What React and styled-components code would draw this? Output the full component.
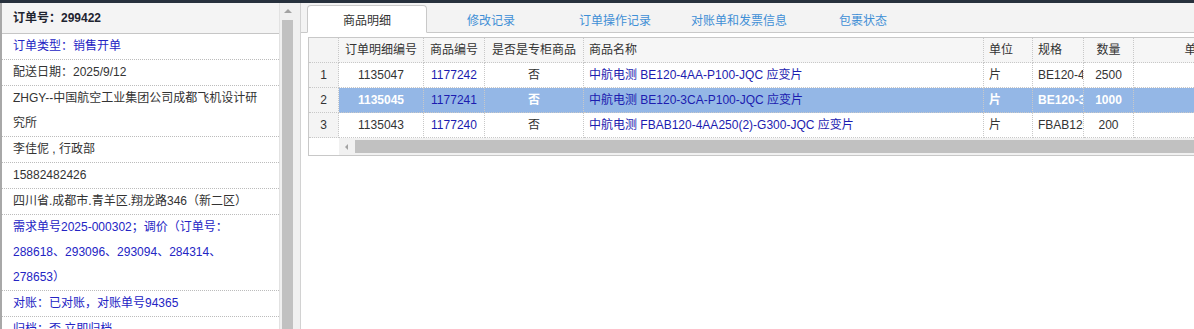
import React from 'react';
import styled, { createGlobalStyle } from 'styled-components';

const GlobalStyle = createGlobalStyle`
  html, body { margin: 0; padding: 0; }
  body {
    font-family: "Liberation Sans", "Noto Sans CJK SC", sans-serif;
    font-size: 12px;
    color: #333;
    background: #fff;
    text-spacing-trim: space-all;
  }
`;

// line breaks follow the wrapping of the original panel
const infoRows = [
    { text: '订单类型：销售开单', link: true },
    { text: '配送日期：2025/9/12' },
    { text: 'ZHGY--中国航空工业集团公司成都飞机设计研\n究所' },
    { text: '李佳伲 , 行政部' },
    { text: '15882482426' },
    { text: '四川省.成都市.青羊区.翔龙路346（新二区）' },
    { text: '需求单号2025-000302；调价（订单号：\n288618、293096、293094、284314、\n278653）', link: true },
    { text: '对账：已对账，对账单号94365', link: true },
    { text: '归档：否,立即归档', link: true },
];

const tabs = ['商品明细', '修改记录', '订单操作记录', '对账单和发票信息', '包裹状态'];

const columns = [
    { title: '订单明细编号', width: 85, align: 'center' },
    { title: '商品编号', width: 61, align: 'center', link: true },
    { title: '是否是专柜商品', width: 99, align: 'center' },
    { title: '商品名称', width: 400, align: 'left', link: true },
    { title: '单位', width: 49, align: 'left' },
    { title: '规格', width: 51, align: 'left' },
    { title: '数量', width: 50, align: 'center' },
    { title: '单价', width: 126, align: 'center' },
];

const items = [
    ['1135047', '1177242', '否', '中航电测 BE120-4AA-P100-JQC 应变片', '片', 'BE120-4AA-P100-JQC', '2500', ''],
    ['1135045', '1177241', '否', '中航电测 BE120-3CA-P100-JQC 应变片', '片', 'BE120-3CA-P100-JQC', '1000', ''],
    ['1135043', '1177240', '否', '中航电测 FBAB120-4AA250(2)-G300-JQC 应变片', '片', 'FBAB120-4AA250(2)-G300-JQC', '200', ''],
];

const tableWidth = columns.reduce((sum, c) => sum + c.width, 30);

export default function App() {
    const selected = 1;
    return (
        <Page>
            <GlobalStyle />
            <TopStrip />
            <Main>
                <Sidebar>
                    <InfoList>
                        <InfoHead>订单号：299422</InfoHead>
                        {infoRows.map((row, i) => (
                            <InfoRow key={i} $link={row.link}>{row.text}</InfoRow>
                        ))}
                    </InfoList>
                    <VScroll>
                        <ArrowBox><ArrowUp /></ArrowBox>
                        <VThumb />
                    </VScroll>
                </Sidebar>
                <Gutter />
                <Content>
                    <TabBar>
                        {tabs.map((t, i) => (
                            <Tab key={t} $active={i === 0}>{t}</Tab>
                        ))}
                    </TabBar>
                    <GridArea>
                        <GridFrame>
                            <GridTable style={{ width: tableWidth }}>
                                <colgroup>
                                    <col style={{ width: 30 }} />
                                    {columns.map(c => <col key={c.title} style={{ width: c.width }} />)}
                                </colgroup>
                                <thead>
                                    <tr>
                                        <NumCell />
                                        {columns.map(c => (
                                            <HeadCell key={c.title} $align={c.align}>{c.title}</HeadCell>
                                        ))}
                                    </tr>
                                </thead>
                                <tbody>
                                    {items.map((row, r) => (
                                        <tr key={row[0]}>
                                            <NumCell>{r + 1}</NumCell>
                                            {row.map((v, c) => (
                                                <Cell key={c}
                                                      $align={columns[c].align}
                                                      $link={columns[c].link}
                                                      $selected={r === selected}>
                                                    {v}
                                                </Cell>
                                            ))}
                                        </tr>
                                    ))}
                                </tbody>
                            </GridTable>
                            <HScroll>
                                <HScrollGap />
                                <HTrack>
                                    <ArrowBoxH><ArrowLeft /></ArrowBoxH>
                                    <HThumb />
                                </HTrack>
                            </HScroll>
                        </GridFrame>
                    </GridArea>
                </Content>
            </Main>
        </Page>
    );
}

const Page = styled.div`
    height: 329px;
    overflow: hidden;
    display: flex;
    flex-direction: column;
    background: #f0f0f0;
`;

const TopStrip = styled.div`
    height: 3px;
    flex-shrink: 0;
    background: #27313d;
`;

const Main = styled.div`
    flex: 1;
    display: flex;
    min-height: 0;
`;

const Sidebar = styled.div`
    width: 295px;
    flex-shrink: 0;
    display: flex;
    background: #fff;
`;

const InfoList = styled.div`
    width: 277px;
    border-left: 2px solid #a8a8a8;
    border-right: 1px solid #e2e2e2;
    overflow: hidden;
`;

const InfoHead = styled.div`
    height: 30px;
    line-height: 30px;
    padding-left: 11px;
    background: #f4f4f4;
    border-bottom: 1px solid #c6c6c6;
    font-weight: bold;
    color: #1f2430;
`;

const InfoRow = styled.div`
    padding: 0 7px 0 11px;
    line-height: 25px;
    white-space: pre-line;
    border-bottom: 1px dotted #bcbcbc;
    color: ${props => props.$link ? '#2424c4' : '#333'};
`;

const VScroll = styled.div`
    width: 15px;
    display: flex;
    flex-direction: column;
    background: #f0f0f0;
`;

const ArrowBox = styled.div`
    height: 17px;
    display: flex;
    justify-content: center;
    padding-top: 6px;
    box-sizing: border-box;
`;

const ArrowUp = styled.div`
    width: 0;
    height: 0;
    border-left: 4px solid transparent;
    border-right: 4px solid transparent;
    border-bottom: 4px solid #a3a3a3;
`;

const VThumb = styled.div`
    flex: 1;
    margin: 0 2px;
    background: #c1c1c1;
`;

const Gutter = styled.div`
    width: 5px;
    flex-shrink: 0;
    background: #f0f0f0;
`;

const Content = styled.div`
    flex: 1;
    min-width: 0;
    display: flex;
    flex-direction: column;
    background: #fff;
    border-left: 1px solid #d2d2d2;
    overflow: hidden;
`;

const TabBar = styled.div`
    height: 30px;
    box-sizing: border-box;
    flex-shrink: 0;
    display: flex;
    align-items: flex-end;
    gap: 4px;
    padding: 2px 0 0 6px;
    background: #f3f3f3;
    border-bottom: 1px solid #c9c9c9;
`;

const Tab = styled.div`
    width: 120px;
    height: 28px;
    box-sizing: border-box;
    margin-bottom: -1px;
    display: flex;
    align-items: center;
    justify-content: center;
    border: 1px solid ${props => props.$active ? '#c9c9c9' : 'transparent'};
    border-bottom-color: ${props => props.$active ? '#fff' : 'transparent'};
    border-radius: 4px 4px 0 0;
    background: ${props => props.$active ? '#fff' : 'transparent'};
    color: ${props => props.$active ? '#333' : '#3f8fd6'};
`;

const GridArea = styled.div`
    padding: 4px 0 0 7px;
`;

const GridFrame = styled.div`
    width: max-content;
    border: 1px solid #c8c8c8;
    border-right: none;
`;

const GridTable = styled.table`
    table-layout: fixed;
    border-collapse: separate;
    border-spacing: 0;
`;

const HeadCell = styled.th`
    padding: 0 5px;
    line-height: 24px;
    font-weight: normal;
    white-space: nowrap;
    overflow: hidden;
    text-align: ${props => props.$align};
    background: #f6f6f6;
    border-right: 1px dotted #c8c8c8;
    border-bottom: 1px dotted #c8c8c8;
    color: #333;
`;

const NumCell = styled.td`
    padding: 0;
    line-height: 24px;
    text-align: center;
    background: #f4f4f4;
    border-right: 1px dotted #c8c8c8;
    border-bottom: 1px dotted #c8c8c8;
    color: #333;
`;

const Cell = styled.td`
    padding: 0 5px;
    line-height: 24px;
    white-space: nowrap;
    overflow: hidden;
    text-align: ${props => props.$align};
    background: ${props => props.$selected ? '#94b7e6' : '#fff'};
    border-right: 1px dotted #c8c8c8;
    border-bottom: 1px dotted #c8c8c8;
    color: ${props => props.$link ? '#1c1cb0' : props.$selected ? '#fff' : '#333'};
    font-weight: ${props => props.$selected && !props.$link ? 'bold' : 'normal'};
`;

const HScroll = styled.div`
    height: 17px;
    display: flex;
`;

const HScrollGap = styled.div`
    width: 30px;
    background: #fff;
`;

const HTrack = styled.div`
    flex: 1;
    display: flex;
    background: #f1f1f1;
`;

const ArrowBoxH = styled.div`
    width: 16px;
    display: flex;
    align-items: center;
    padding-left: 6px;
    box-sizing: border-box;
`;

const ArrowLeft = styled.div`
    width: 0;
    height: 0;
    border-top: 3px solid transparent;
    border-bottom: 3px solid transparent;
    border-right: 3px solid #a3a3a3;
`;

const HThumb = styled.div`
    flex: 1;
    margin: 2px 0;
    background: #c1c1c1;
`;
